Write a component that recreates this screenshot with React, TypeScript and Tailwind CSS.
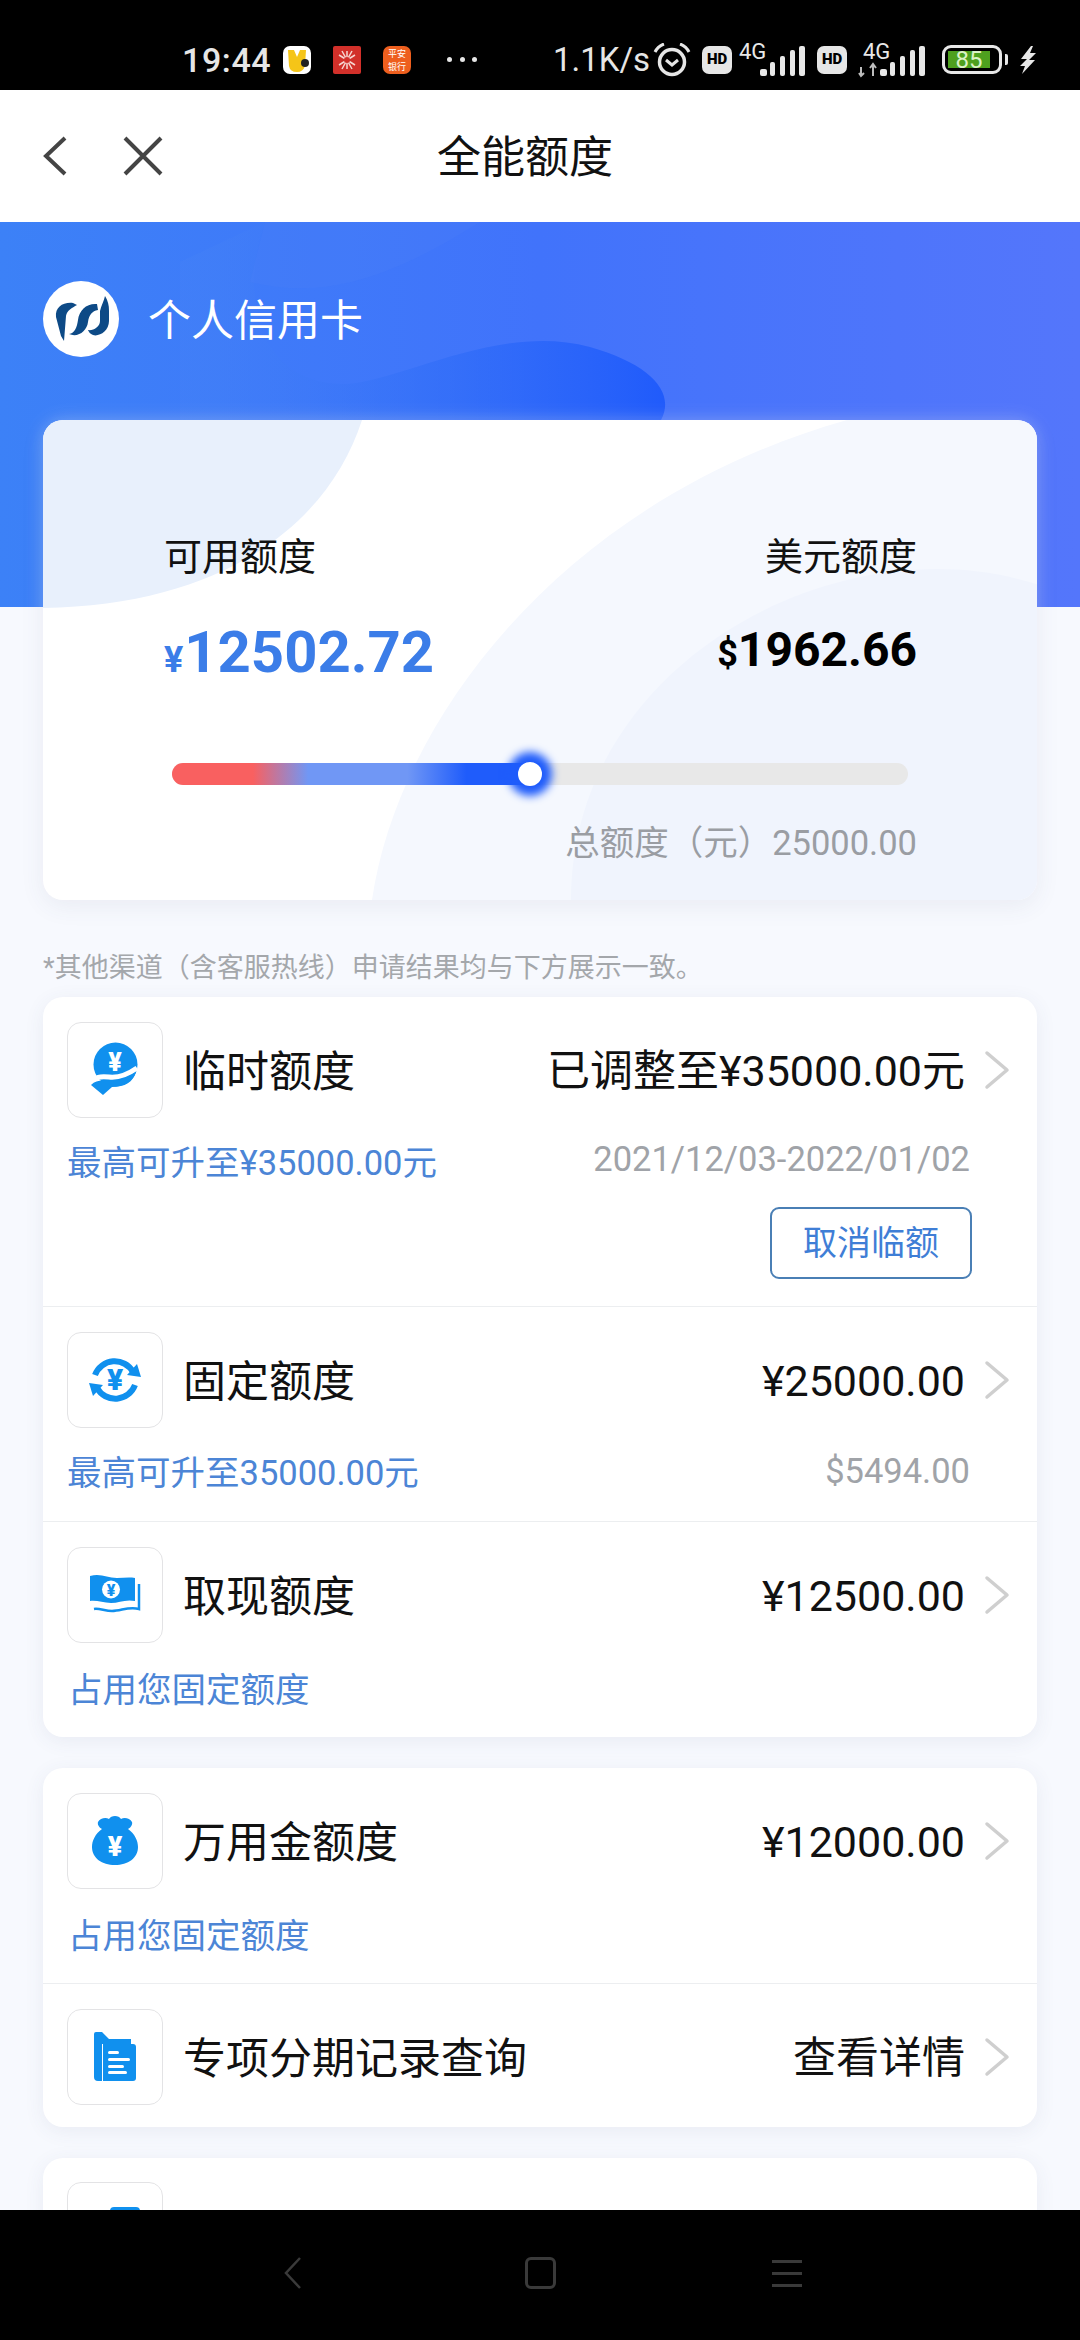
import React from 'react';

const BLUE = '#1090ee';

const Yen = ({ x, y, size, fill = '#fff' }: { x: number; y: number; size: number; fill?: string }) => (
    <text x={x} y={y} fontSize={size} fontWeight={900} fill={fill} textAnchor="middle" fontFamily="Roboto, sans-serif">¥</text>
);

const HandIcon = () => (
    <svg width="60" height="60" viewBox="0 0 60 60">
        <circle cx="30.5" cy="24.5" r="22" fill={BLUE} />
        <Yen x={30} y={31} size={25} />
        <path d="M4 46 C10 36 16 36 24 37 C33 38 42 35 52 28" fill="none" stroke="#fff" strokeWidth="5" />
        <path d="M6 45 C11 40 17 40 24 41 C33 42 42 38 51 32 C48 42 40 47 27 47 L18 55 Z" fill={BLUE} />
    </svg>
);

const CycleIcon = () => (
    <svg width="60" height="60" viewBox="0 0 60 60">
        <path d="M10 25 A21 21 0 0 1 48 22" fill="none" stroke={BLUE} strokeWidth="6" />
        <path d="M50 35 A21 21 0 0 1 12 38" fill="none" stroke={BLUE} strokeWidth="6" />
        <path d="M42 25 L56 27 L52 14 Z" fill={BLUE} />
        <path d="M18 35 L4 33 L8 46 Z" fill={BLUE} />
        <Yen x={30} y={40} size={30} fill={BLUE} />
    </svg>
);

const CashIcon = () => (
    <svg width="60" height="60" viewBox="0 0 60 60">
        <path d="M5 11 C16 8 22 13 32 13 C38 13 44 12 50 13 L50 36 C40 34 34 38 26 38 C18 38 12 35 5 36 Z" fill={BLUE} />
        <circle cx="26" cy="24.5" r="9" fill="#fff" />
        <Yen x={26} y={30.5} size={16} fill={BLUE} />
        <path d="M54 19 L54 44 C44 41 36 46 27 46 C20 46 14 43 9 44" fill="none" stroke={BLUE} strokeWidth="2.5" />
    </svg>
);

const BagIcon = () => (
    <svg width="60" height="60" viewBox="0 0 60 60">
        <path d="M13 11 C15 7 21 6 24 8 C26 4 34 4 36 8 C39 6 45 7 47 11 C48 14 45 17 43 18 C50 23 53 30 53 36 C53 47 43 54 30 54 C17 54 7 47 7 36 C7 30 10 23 17 18 C15 17 12 14 13 11 Z" fill={BLUE} />
        <Yen x={30} y={45} size={27} />
    </svg>
);

const FolderIcon = () => (
    <svg width="60" height="60" viewBox="0 0 60 60">
        <path d="M11 5 L17 5 L24 12 L46 12 L46 17 L17 17 L17 54 L13 54 Q9 54 9 50 L9 7 Q9 5 11 5 Z" fill={BLUE} />
        <path d="M18 17 L48 17 Q51 17 51 20 L51 51 Q51 54 48 54 L18 54 Z" fill={BLUE} />
        <rect x="23" y="24" width="11" height="3" rx="1.5" fill="#fff" />
        <rect x="23" y="31" width="22" height="3" rx="1.5" fill="#fff" />
        <rect x="23" y="38" width="16" height="3" rx="1.5" fill="#fff" />
        <rect x="23" y="44" width="19" height="3" rx="1.5" fill="#fff" />
    </svg>
);

const PeekIcon = () => (
    <svg width="60" height="60" viewBox="0 0 60 60">
        <rect x="25" y="7" width="30" height="40" rx="4" fill={BLUE} />
    </svg>
);

const Chevron = () => (
    <svg width="28" height="40" viewBox="0 0 28 40" className="shrink-0">
        <path d="M4 3 L24 20 L4 37" fill="none" stroke="#cfcfcf" strokeWidth="3.5" strokeLinecap="round" strokeLinejoin="round" />
    </svg>
);

const Row = ({ icon, title, value }: { icon: React.ReactNode; title?: string; value?: string }) => (
    <div className="flex h-[96px] items-center pl-[24px] pr-[26px]">
        <div className="flex h-[96px] w-[96px] shrink-0 items-center justify-center rounded-[14px] border border-[#e3e3e5] bg-white">
            {icon}
        </div>
        {title && <span className="ml-[20px] flex-1 pt-[3px] text-[43px] leading-[60px] text-[#111]">{title}</span>}
        {value && <span className="pt-[2px] text-[43px] leading-[60px] text-[#111]">{value}</span>}
        {value && <span className="ml-[18px]"><Chevron /></span>}
    </div>
);

const Signal = ({ arrows }: { arrows?: boolean }) => (
    <svg width="66" height="34" viewBox="0 0 66 34" className="overflow-visible">
        <text x={arrows ? 4 : 0} y="16" fontSize="22" fill="#e8e8e8" fontFamily="Roboto, sans-serif">4G</text>
        {arrows && <path d="M2 24 L2 33 M14 21 L14 33 M0 30 L2 33 L5 30 M11 25 L14 21 L17 25" stroke="#bdbdbd" strokeWidth="2" fill="none" />}
        <rect x="21" y="26" width="7" height="7" rx="2" fill="#e8e8e8" />
        <rect x="31" y="19" width="5" height="14" rx="2" fill="#e8e8e8" />
        <rect x="41" y="13" width="5" height="20" rx="2" fill="#e8e8e8" />
        <rect x="51" y="7" width="5" height="26" rx="2" fill="#e8e8e8" />
        <rect x="60" y="3" width="6" height="30" rx="2" fill="#e8e8e8" />
    </svg>
);

const Hd = () => (
    <div className="flex h-[28px] w-[30px] items-center justify-center rounded-[7px] bg-[#e6e6e6] text-[15px] font-black text-black">HD</div>
);

const StatusBar = () => (
    <div className="flex h-[90px] shrink-0 items-center bg-black pl-[182px] pt-[29px] text-[#e6e6e6]">
        <span className="w-[90px] whitespace-nowrap text-[34px] font-medium leading-[40px] tracking-[0.6px]">19:44</span>
        <svg width="28" height="28" viewBox="0 0 28 28" className="ml-[11px]">
            <rect width="28" height="28" rx="7" fill="#fff" />
            <path d="M5 4 L11 4 L14 11 L17 4 L23 4 L22 20 Q20 26 14 26 Q7 26 6 20 Z" fill="#f5c518" />
            <circle cx="22" cy="17" r="4" fill="#222" />
        </svg>
        <svg width="28" height="28" viewBox="0 0 28 28" className="ml-[22px]">
            <rect width="28" height="28" rx="2" fill="#d2302a" />
            <path d="M14 5 L14 23 M6 9 L22 19 M6 19 L22 9 M9 5 L19 23 M19 5 L9 23" stroke="#f6d7d2" strokeWidth="1.5" />
            <circle cx="14" cy="14" r="3" fill="#d2302a" />
        </svg>
        <svg width="28" height="28" viewBox="0 0 28 28" className="ml-[22px]">
            <rect width="28" height="28" rx="7" fill="#ee5f1e" />
            <text x="14" y="11" fontSize="9" fill="#fff" textAnchor="middle" fontFamily="'Noto Sans CJK SC', sans-serif">平安</text>
            <text x="14" y="24" fontSize="9" fill="#fff" textAnchor="middle" fontFamily="'Noto Sans CJK SC', sans-serif">银行</text>
        </svg>
        <div className="ml-[36px] flex w-[30px] justify-between">
            <span className="h-[5px] w-[5px] rounded-full bg-[#e6e6e6]" />
            <span className="h-[5px] w-[5px] rounded-full bg-[#e6e6e6]" />
            <span className="h-[5px] w-[5px] rounded-full bg-[#e6e6e6]" />
        </div>
        <span className="ml-[76px] w-[94px] whitespace-nowrap text-[33px] leading-[40px]">1.1K/s</span>
        <svg width="38" height="34" viewBox="0 0 38 34" className="ml-[6px]">
            <circle cx="19" cy="19" r="12.5" fill="none" stroke="#e6e6e6" strokeWidth="3.5" />
            <path d="M13 17 L19 22 L25 17" fill="none" stroke="#e6e6e6" strokeWidth="3" />
            <path d="M2 9 Q5 3 11 1 M36 9 Q33 3 27 1" fill="none" stroke="#e6e6e6" strokeWidth="3" />
        </svg>
        <div className="ml-[11px]"><Hd /></div>
        <div className="ml-[7px]"><Signal /></div>
        <div className="ml-[12px]"><Hd /></div>
        <div className="ml-[12px]"><Signal arrows /></div>
        <div className="ml-[17px] flex h-[29px] w-[60px] items-center rounded-[9px] border-[3px] border-[#e8e8e8] px-[3px]">
            <div className="flex h-[17px] w-[42px] items-center justify-center bg-[#4ea01e] text-[24px] leading-none text-[#dcf3c6]">85</div>
        </div>
        <div className="ml-[3px] h-[11px] w-[3px] rounded-r-[2px] bg-[#e8e8e8]" />
        <svg width="18" height="28" viewBox="0 0 18 28" className="ml-[11px]">
            <path d="M12 0 L2 13 L8 13 L1 20 L6 20 L3 28 L16 14 L10 14 L17 7 L11 7 L14 0 Z" fill="#e8e8e8" />
        </svg>
    </div>
);

const Header = () => (
    <div className="relative flex h-[132px] shrink-0 items-center justify-center bg-white pr-[30px] pt-[3px]">
        <span className="text-[44px] leading-[60px] text-[#111]">全能额度</span>
        <div className="absolute left-[43px] top-[46px] flex items-center gap-[56px]">
            <svg width="24" height="40" viewBox="0 0 24 40">
                <path d="M22 2 L3 20 L22 38" fill="none" stroke="#444" strokeWidth="4" />
            </svg>
            <svg width="40" height="40" viewBox="0 0 40 40">
                <path d="M2 2 L38 38 M38 2 L2 38" fill="none" stroke="#444" strokeWidth="4" />
            </svg>
        </div>
    </div>
);

const Hero = () => (
    <div className="relative h-[385px] overflow-hidden bg-gradient-to-r from-[#3c81f7] via-[#4173fb] to-[#5476fb]">
        <svg width="1080" height="385" viewBox="0 0 1080 385" className="absolute left-0 top-0">
            <defs>
                <linearGradient id="blob" x1="0" x2="1" y1="0" y2="0">
                    <stop offset="0" stopColor="#4a86f5" stopOpacity="0.25" />
                    <stop offset="0.5" stopColor="#2f6df7" stopOpacity="0.6" />
                    <stop offset="1" stopColor="#1c58fb" />
                </linearGradient>
            </defs>
            <path d="M265 0 C242 60 250 162 345 162 C400 160 500 100 590 125 C650 142 676 170 661 198 L180 198 L180 40 Z" fill="url(#blob)" opacity="0.9" />
            <path d="M265 0 L480 0 C400 50 330 80 250 60 Z" fill="#4a80f8" opacity="0.25" />
        </svg>
        <div className="relative flex items-center pl-[43px] pt-[59px]">
            <div className="flex h-[76px] w-[76px] items-center justify-center rounded-full bg-white">
                <svg width="56" height="56" viewBox="0 0 56 56" className="overflow-visible">
                    <path d="M3 26 C2 16 10 11 20 12 L24 14 C19 17 14 19 13 25 L11 50 L8 45 Z" fill="#0d4a86" />
                    <path d="M16 43 C22 42 24 36 25 29 C26 19 34 12 44 13 L45 19 C39 20 36 24 35 31 C34 40 25 47 16 43 Z" fill="#0d4a86" />
                    <path d="M52 5 C55 10 56 14 56 20 L56 30 C56 40 46 46 40 44 C37 43 36 41 35 39 C40 40 47 36 47 30 L47 20 C48 15 51 10 52 5 Z" fill="#0d4a86" />
                </svg>
            </div>
            <span className="ml-[29px] pt-[3px] text-[43px] leading-[60px] text-white">个人信用卡</span>
        </div>
    </div>
);

const QuotaCard = () => (
    <div className="relative z-10 mx-[43px] -mt-[187px] h-[480px] overflow-hidden rounded-[20px] bg-white shadow-[0_6px_24px_rgba(60,80,120,0.08),0_0_18px_rgba(255,255,255,0.3)]">
        <svg width="996" height="480" viewBox="0 0 996 480" className="absolute left-0 top-0">
            <path d="M0 0 L319 0 C285 105 180 185 0 188 Z" fill="#e8f0fc" />
            <path d="M804 0 L996 0 L996 480 L329 480 C355 300 520 80 804 0 Z" fill="#f5f8fe" />
            <path d="M996 165 C800 100 528 240 528 480 L996 480 Z" fill="#f0f4fd" />
        </svg>
        <div className="relative flex justify-between pl-[121px] pr-[120px] pt-[108px]">
            <div>
                <div className="text-[38px] leading-[58px] text-[#111]">可用额度</div>
                <div className="mt-[32px] flex items-baseline text-[58px] font-bold leading-[68px] text-[#3b7de8]">
                    <span className="mr-[1px] text-[36px]">¥</span>12502.72
                </div>
            </div>
            <div className="flex flex-col items-end">
                <div className="text-[38px] leading-[58px] text-[#111]">美元额度</div>
                <div className="mt-[33px] flex items-baseline text-[48px] font-bold leading-[62px] text-black">
                    <span className="text-[36px]">$</span>1962.66
                </div>
            </div>
        </div>
        <div className="relative mx-[129px] mt-[69px] h-[22px] rounded-full bg-[#e8e8e8]">
            <div className="h-[22px] w-[368px] rounded-l-full bg-[linear-gradient(90deg,#f96060_0%,#f96060_22%,#7097f5_37%,#7097f5_64%,#1f5cfb_80%,#1f5cfb_100%)]" />
            <div className="absolute left-[346px] top-[-1px] h-[24px] w-[24px] rounded-full bg-white shadow-[0_0_8px_10px_#1f5cfb]" />
        </div>
        <div className="relative mt-[33px] pr-[120px] text-right text-[34.5px] leading-[50px] text-[#9a9da3]">总额度（元）25000.00</div>
    </div>
);

const Sub = ({ children }: { children: React.ReactNode }) => (
    <span className="text-[34.5px] leading-[46px] text-[#4c85d6]">{children}</span>
);

const cardCls = 'mx-[43px] overflow-hidden rounded-[20px] bg-white shadow-[0_4px_20px_rgba(60,80,120,0.08)]';

const LimitCards = () => (
    <>
        <div className={`${cardCls} mt-[-7px] h-[740px]`}>
            <div className="h-[310px] border-b border-[#eceef0] pt-[25px]">
                <Row icon={<HandIcon />} title="临时额度" value="已调整至¥35000.00元" />
                <div className="mt-[22px] flex items-start justify-between pl-[24px] pr-[67px]">
                    <Sub>最高可升至¥35000.00元</Sub>
                    <span className="-mt-[4px] text-[34.5px] leading-[46px] text-[#a0a3a8]">2021/12/03-2022/01/02</span>
                </div>
                <div className="mt-[21px] flex justify-end pr-[65px]">
                    <button className="h-[72px] w-[202px] rounded-[9px] border-2 border-[#4a7fb5] text-[34px] text-[#3f7ed6]">取消临额</button>
                </div>
            </div>
            <div className="h-[215px] border-b border-[#eceef0] pt-[25px]">
                <Row icon={<CycleIcon />} title="固定额度" value="¥25000.00" />
                <div className="mt-[22px] flex items-start justify-between pl-[24px] pr-[67px]">
                    <Sub>最高可升至35000.00元</Sub>
                    <span className="-mt-[2px] text-[34.5px] leading-[46px] text-[#a0a3a8]">$5494.00</span>
                </div>
            </div>
            <div className="h-[215px] pt-[25px]">
                <Row icon={<CashIcon />} title="取现额度" value="¥12500.00" />
                <div className="mt-[24px] pl-[25px]"><Sub>占用您固定额度</Sub></div>
            </div>
        </div>
        <div className={`${cardCls} mt-[31px] h-[359px]`}>
            <div className="h-[216px] border-b border-[#eceef0] pt-[25px]">
                <Row icon={<BagIcon />} title="万用金额度" value="¥12000.00" />
                <div className="mt-[24px] pl-[25px]"><Sub>占用您固定额度</Sub></div>
            </div>
            <div className="pt-[25px]">
                <Row icon={<FolderIcon />} title="专项分期记录查询" value="查看详情" />
            </div>
        </div>
        <div className={`${cardCls} mt-[31px] h-[200px] pt-[24px]`}>
            <Row icon={<PeekIcon />} />
        </div>
    </>
);

const BottomNav = () => (
    <div className="relative z-20 flex h-[130px] shrink-0 justify-center bg-black pt-[47px]">
        <div className="flex w-[247px] justify-center">
            <svg width="18" height="32" viewBox="0 0 18 32"><path d="M16 1 L2 16 L16 31" fill="none" stroke="#3a3a3a" strokeWidth="2.5" /></svg>
        </div>
        <div className="flex w-[247px] justify-center">
            <div className="h-[32px] w-[31px] rounded-[6px] border-[3px] border-[#3a3a3a]" />
        </div>
        <div className="flex w-[247px] flex-col items-center gap-[9px] pt-[3px]">
            <div className="h-[3px] w-[30px] bg-[#3a3a3a]" />
            <div className="h-[3px] w-[30px] bg-[#3a3a3a]" />
            <div className="h-[3px] w-[30px] bg-[#3a3a3a]" />
        </div>
    </div>
);

export default function App() {
    return (
        <div className="flex h-[2340px] w-[1080px] flex-col overflow-hidden bg-[#f7f9fe] font-[Roboto,'Noto_Sans_CJK_SC',sans-serif]">
            <StatusBar />
            <Header />
            <div className="h-[1988px] shrink-0 overflow-hidden">
                <Hero />
                <QuotaCard />
                <div className="ml-[43px] mt-[49px] h-[55px] text-[27px] leading-[38px] text-[#a4a7ab]">*其他渠道（含客服热线）申请结果均与下方展示一致。</div>
                <LimitCards />
            </div>
            <BottomNav />
        </div>
    );
}
